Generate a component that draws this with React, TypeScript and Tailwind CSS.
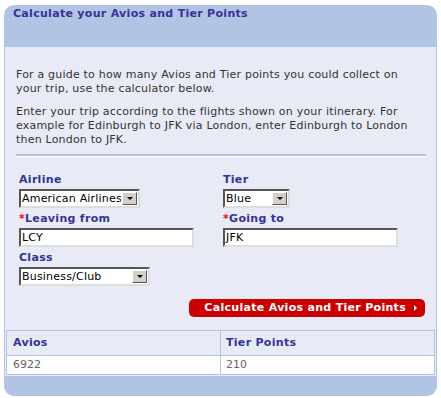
import React from "react"

const font = { fontFamily: '"DejaVu Sans", Verdana, sans-serif' }

function Select({ value, width }: { value: string; width: string }) {
  return (
    <div className={`flex h-[19px] ${width} border-2 border-t-[#555] border-l-[#555] border-b-[#ddd] border-r-[#ddd] bg-white`}>
      <div className="flex-1 overflow-hidden whitespace-nowrap pl-[1px] text-[11px] leading-[15px] text-black">{value}</div>
      <div className="m-[1px] flex w-[15px] items-center justify-center border border-t-white border-l-white border-b-[#555] border-r-[#555] bg-[#d4d0c8]">
        <div className="h-0 w-0 border-x-[3px] border-t-[3px] border-x-transparent border-t-black" />
      </div>
    </div>
  )
}

function TextInput({ value }: { value: string }) {
  return (
    <div className="h-[19px] w-[175px] border-2 border-t-[#555] border-l-[#555] border-b-[#ddd] border-r-[#ddd] bg-white pl-[1px] text-[11px] leading-[15px] text-black">
      {value}
    </div>
  )
}

function Label({ text, required }: { text: string; required?: boolean }) {
  return (
    <div className="text-[11px] font-bold leading-[15px] tracking-[0.3px] text-[#333399]">
      {required && <span className="text-[#ff0000]">*</span>}
      {text}
    </div>
  )
}

export default function App() {
  return (
    <div className="h-[398px] w-[441px] bg-white pl-[4px] pt-[5px]" style={font}>
      <div className="w-[433px]">
        {/* Header */}
        <div className="h-[42px] rounded-t-[10px] bg-[#b2c4e4] pl-[9px] pt-[1px]">
          <div className="text-[11px] font-bold leading-[15px] tracking-[0.3px] text-[#333399]">
            Calculate your Avios and Tier Points
          </div>
        </div>

        {/* Body */}
        <div className="border-x border-[#b2c4e4] bg-[#e8ebf5] px-[11px] pt-[21px] text-[11px] leading-[14px] tracking-[0.2px] text-[#333]">
          <p>
            For a guide to how many Avios and Tier points you could collect on your trip, use the calculator below.
          </p>
          <p className="mt-[9px]">
            Enter your trip according to the flights shown on your itinerary. For example for Edinburgh to JFK via
            London, enter Edinburgh to London then London to JFK.
          </p>
          <div className="mt-[7px] h-[3px] w-[410px] border-t-2 border-[#b2c4e4] bg-white" />

          <div className="grid grid-cols-[204px_1fr] gap-y-[3px] pl-[3px] pt-[15px]">
            <div>
              <Label text="Airline" />
              <div className="mt-[2px]">
                <Select value="American Airlines" width="w-[121px]" />
              </div>
            </div>
            <div>
              <Label text="Tier" />
              <div className="mt-[2px]">
                <Select value="Blue" width="w-[67px]" />
              </div>
            </div>
            <div>
              <Label text="Leaving from" required />
              <div className="mt-[2px]">
                <TextInput value="LCY" />
              </div>
            </div>
            <div>
              <Label text="Going to" required />
              <div className="mt-[2px]">
                <TextInput value="JFK" />
              </div>
            </div>
            <div>
              <Label text="Class" />
              <div className="mt-[2px]">
                <Select value="Business/Club" width="w-[131px]" />
              </div>
            </div>
          </div>

          <div className="flex justify-end pt-[13px]">
            <button className="flex h-[18px] w-[236px] items-center justify-end rounded-[5px] bg-[#cc0000] pr-[8px] text-[11px] font-bold tracking-[0.3px] text-white">
              Calculate Avios and Tier Points
              <span className="ml-[8px] h-0 w-0 border-y-[3px] border-l-[3px] border-y-transparent border-l-white" />
            </button>
          </div>

          {/* Results */}
          <div className="-mx-[10px] mt-[13px] pb-[1px] tracking-normal">
            <div className="grid grid-cols-[214px_1fr] border border-[#b2c4e4]">
              <div className="h-[24px] border-r border-[#b2c4e4] bg-[#e8ebf5] pl-[6px] pt-[5px] text-[11px] font-bold tracking-[0.3px] text-[#333399]">
                Avios
              </div>
              <div className="h-[24px] bg-[#e8ebf5] pl-[5px] pt-[5px] text-[11px] font-bold tracking-[0.3px] text-[#333399]">
                Tier Points
              </div>
              <div className="h-[19px] border-r border-t border-[#b2c4e4] bg-white pl-[6px] pt-[2px] text-[11px] text-[#666]">
                6922
              </div>
              <div className="h-[19px] border-t border-[#b2c4e4] bg-white pl-[5px] pt-[2px] text-[11px] text-[#666]">
                210
              </div>
            </div>
          </div>
        </div>

        {/* Footer */}
        <div className="h-[20px] rounded-b-[10px] bg-[#b2c4e4]" />
      </div>
    </div>
  )
}
